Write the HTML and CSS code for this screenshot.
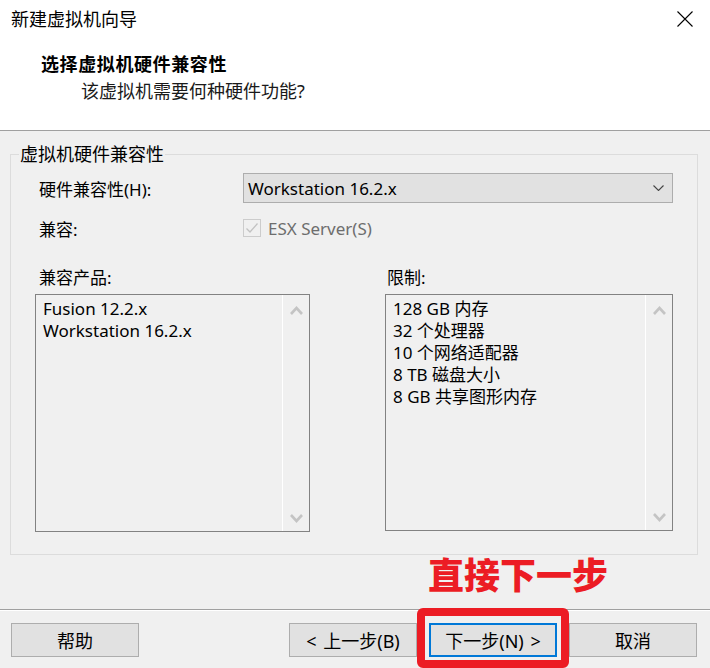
FILE: index.html
```html
<!DOCTYPE html>
<html lang="zh-CN">
<head>
    <meta charset="UTF-8">
    <title>新建虚拟机向导</title>
    <link rel="stylesheet" href="styles.css">
</head>
<body>

    <div class="dialog">

        <div class="header">
            <div class="titlebar">
                <div class="title">新建虚拟机向导</div>
                <svg class="close" width="16" height="16" viewBox="0 0 16 16">
                    <path d="M0.5 0.5 L15.5 15.5 M15.5 0.5 L0.5 15.5" stroke="#000" stroke-width="1.1" fill="none"/>
                </svg>
            </div>
            <div class="heading">选择虚拟机硬件兼容性</div>
            <div class="subheading">该虚拟机需要何种硬件功能?</div>
        </div>

        <div class="main">
            <fieldset class="group">
                <legend class="group-title">虚拟机硬件兼容性</legend>
                <div class="group-body">

                    <div class="row">
                        <div class="label">硬件兼容性(H):</div>
                        <div class="select">
                            <span>Workstation 16.2.x</span>
                            <svg width="11" height="6" viewBox="0 0 11 6">
                                <polyline points="0.5,0.5 5.5,5.5 10.5,0.5" stroke="#444" stroke-width="1.1" fill="none"/>
                            </svg>
                        </div>
                    </div>

                    <div class="row row-check">
                        <div class="label">兼容:</div>
                        <div class="check">
                            <span class="check-box">
                                <svg width="16" height="16" viewBox="0 0 16 16">
                                    <polyline points="2.5,8.5 6,12 13.5,3.5" stroke="#c2c2c2" stroke-width="1.3" fill="none"/>
                                </svg>
                            </span>
                            <span class="check-text">ESX Server(S)</span>
                        </div>
                    </div>

                    <div class="lists">
                        <div class="list-col">
                            <div class="list-label">兼容产品:</div>
                            <div class="listbox listbox-left">
                                <div class="list-items">
                                    <div>Fusion 12.2.x</div>
                                    <div>Workstation 16.2.x</div>
                                </div>
                                <div class="scrollbar">
                                    <svg width="13" height="9" viewBox="0 0 13 9"><polyline points="1,8 6.5,2 12,8" stroke="#c4c4c4" stroke-width="2.6" fill="none"/></svg>
                                    <svg width="13" height="9" viewBox="0 0 13 9"><polyline points="1,1 6.5,7 12,1" stroke="#c4c4c4" stroke-width="2.6" fill="none"/></svg>
                                </div>
                            </div>
                        </div>
                        <div class="list-col">
                            <div class="list-label list-label-right">限制:</div>
                            <div class="listbox listbox-right">
                                <div class="list-items">
                                    <div>128 GB 内存</div>
                                    <div>32 个处理器</div>
                                    <div>10 个网络适配器</div>
                                    <div>8 TB 磁盘大小</div>
                                    <div>8 GB 共享图形内存</div>
                                </div>
                                <div class="scrollbar">
                                    <svg width="13" height="9" viewBox="0 0 13 9"><polyline points="1,8 6.5,2 12,8" stroke="#c4c4c4" stroke-width="2.6" fill="none"/></svg>
                                    <svg width="13" height="9" viewBox="0 0 13 9"><polyline points="1,1 6.5,7 12,1" stroke="#c4c4c4" stroke-width="2.6" fill="none"/></svg>
                                </div>
                            </div>
                        </div>
                    </div>

                </div>
            </fieldset>
        </div>

        <div class="footer">
            <button class="btn" type="button">帮助</button>
            <div class="footer-right">
                <button class="btn" type="button">&lt; 上一步(B)</button>
                <div class="callout">
                    <div class="callout-text">直接下一步</div>
                    <button class="btn btn-default" type="button">下一步(N) &gt;</button>
                    <span class="callout-box"></span>
                </div>
                <button class="btn" type="button">取消</button>
            </div>
        </div>

    </div>

</body>
</html>
```

FILE: styles.css
```css
* {
    margin: 0;
    padding: 0;
    box-sizing: border-box;
}
body {
    font: 17px "Noto Sans", "Noto Sans CJK SC", sans-serif;
    color: #000;
    background: #f0f0f0;
}

/***************************************************/

.dialog {
    width: 710px;
    height: 668px;
    overflow: hidden;
}

.header {
    background: #fff;
    height: 131px;
    border-bottom: 1px solid #a0a0a0;
}
.titlebar {
    display: flex;
    justify-content: space-between;
    align-items: center;
    height: 38px;
    padding: 0 17px 0 11px;
}
.title {
    font-size: 18px;
    line-height: 38px;
}
.heading {
    font-size: 18px;
    font-weight: bold;
    line-height: 24px;
    margin-top: 14px;
    padding-left: 41px;
    letter-spacing: 0.6px;
}
.subheading {
    font-size: 18px;
    line-height: 24px;
    margin-top: 3px;
    padding-left: 81px;
    color: #1a1a1a;
}

/***************************************************/

.main {
    height: 478px;
    padding-top: 11px;
}
.group {
    margin: 0 12px 0 10px;
    border: 1px solid #dcdcdc;
    padding: 0;
}
.group-title {
    font-size: 18px;
    line-height: 24px;
    margin-left: 8px;
    padding: 0 1px;
}
.group-body {
    padding: 7px 24px 22px 24px;
}

.row {
    display: grid;
    grid-template-columns: 208px 1fr;
    align-items: center;
    height: 30px;
}
.row-check {
    margin-top: 10px;
}
.label {
    padding-left: 4px;
}
.select {
    display: flex;
    justify-content: space-between;
    align-items: center;
    height: 30px;
    background: #e1e1e1;
    border: 1px solid #adadad;
    padding: 0 8px 0 4px;
}

.check {
    display: flex;
    align-items: center;
}
.check-box {
    display: flex;
    align-items: center;
    justify-content: center;
    width: 18px;
    height: 18px;
    border: 1px solid #cccccc;
    margin-right: 7px;
}
.check-text {
    color: #6d6d6d;
}

/*********************/

.lists {
    display: grid;
    grid-template-columns: 275px 288px;
    column-gap: 75px;
    margin-top: 23px;
}
.list-label {
    line-height: 24px;
    margin-bottom: 4px;
    padding-left: 4px;
}
.list-label-right {
    padding-left: 2px;
}
.listbox {
    display: flex;
    height: 238px;
    border: 1px solid #828282;
}
.listbox-right {
    height: 237px;
}
.list-items {
    flex: 1;
    padding: 3px 7px;
    line-height: 22px;
}
.scrollbar {
    display: flex;
    flex-direction: column;
    justify-content: space-between;
    align-items: center;
    width: 27px;
    border-left: 1px solid #fff;
    padding: 11px 0 8px 0;
}

/***************************************************/

.footer {
    display: flex;
    justify-content: space-between;
    height: 59px;
    border-top: 1px solid #a0a0a0;
    box-shadow: inset 0 1px #fff;
    padding: 13px 13px 0 11px;
}
.footer-right {
    display: flex;
    gap: 12px;
}
.btn {
    font: 18px "Noto Sans", "Noto Sans CJK SC", sans-serif;
    word-spacing: 2px;
    color: #000;
    width: 128px;
    height: 34px;
    background: #e1e1e1;
    border: 1px solid #adadad;
}
.btn-default {
    border: 2px solid #0078d7;
}

/* red annotation */
.callout {
    position: relative;
}
.callout-box {
    position: absolute;
    left: -12px;
    top: -15px;
    width: 152px;
    height: 60px;
    border: 8px solid #ec1c24;
    border-radius: 6px;
}
.callout-text {
    position: absolute;
    left: -1px;
    top: -65px;
    font-size: 36px;
    line-height: 36px;
    font-weight: 900;
    color: #ec1c24;
    white-space: nowrap;
}
```
